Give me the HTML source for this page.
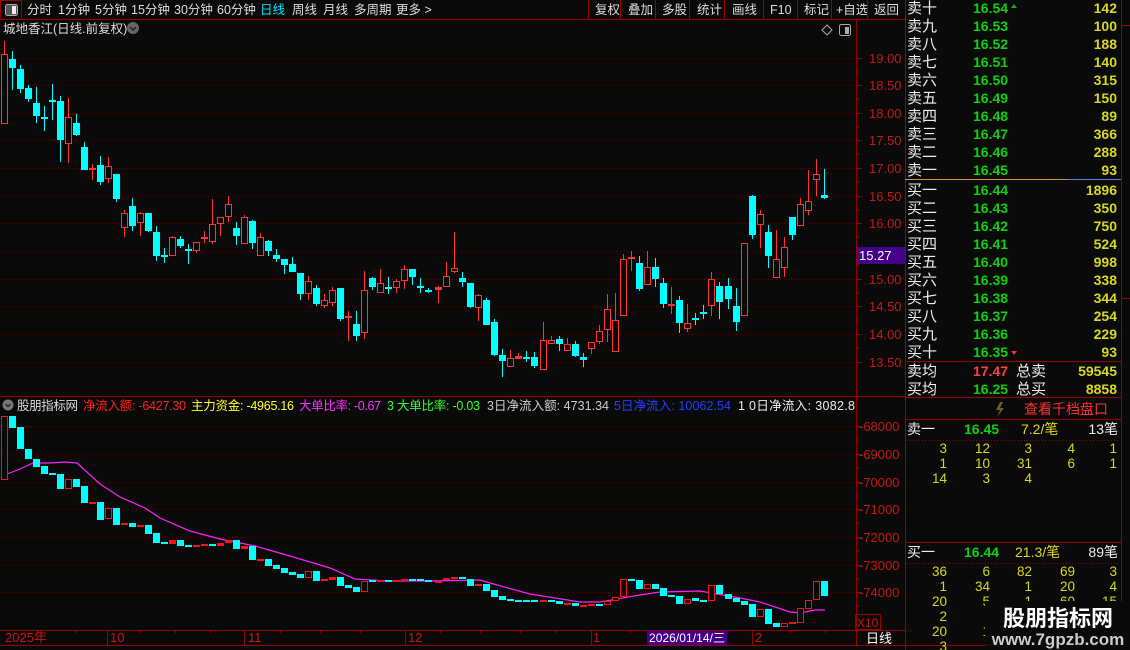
<!DOCTYPE html>
<html><head><meta charset="utf-8"><style>
html,body{margin:0;padding:0;background:#0a0a0a;width:1130px;height:650px;overflow:hidden}
svg{display:block}
text{font-family:"Liberation Sans","Noto Sans CJK SC",sans-serif}
</style></head><body>
<svg width="1130" height="650" viewBox="0 0 1130 650" xmlns="http://www.w3.org/2000/svg">
<rect width="1130" height="650" fill="#0a0a0a"/>
<!-- top bar -->
<rect x="0.5" y="0.5" width="21" height="19" fill="none" stroke="#900"/>
<rect x="5.5" y="4.5" width="12" height="11" rx="2" fill="#555" stroke="#aaa"/>
<rect x="12" y="6" width="4" height="8" fill="#eee"/>
<g font-size="12.5" fill="#ddd">
<text x="27" y="14">分时</text><text x="58" y="14">1分钟</text><text x="95" y="14">5分钟</text><text x="131" y="14">15分钟</text><text x="174" y="14">30分钟</text><text x="217" y="14">60分钟</text><text x="260" y="14" fill="#00e5ff">日线</text><text x="292" y="14">周线</text><text x="323" y="14">月线</text><text x="354" y="14">多周期</text><text x="396" y="14">更多 &gt;</text>
<text x="595" y="14">复权</text><text x="628" y="14">叠加</text><text x="662" y="14">多股</text><text x="697" y="14">统计</text><text x="732" y="14">画线</text><text x="770" y="14">F10</text><text x="804" y="14">标记</text><text x="836" y="14">+自选</text><text x="874" y="14">返回</text>
</g>
<g stroke="#900"><path d="M588.5 0V19M620.5 0V19M655.5 0V19M689.5 0V19M724.5 0V19M763.5 0V19M797.5 0V19M831.5 0V19M867.5 0V19M0 19.5H905"/></g>
<text x="3" y="33" font-size="12.5" fill="#ddd">城地香江(日线.前复权)</text>
<circle cx="133" cy="28" r="6" fill="#666"/><path d="M130 27l3 3 3-3" stroke="#222" stroke-width="1.5" fill="none"/>
<path d="M827 25l5 5-5 5-5-5z" fill="none" stroke="#aaa"/>
<rect x="839.5" y="24.5" width="11" height="11" rx="2" fill="none" stroke="#aaa"/><rect x="845" y="27" width="4" height="7" fill="#aaa"/>
<!-- grid upper -->
<g stroke="#6a0000" stroke-dasharray="1,3">
<path d="M0 58.5H855M0 85.5H855M0 113.5H855M0 140.5H855M0 168.5H855M0 196.5H855M0 223.5H855M0 251.5H855M0 279.5H855M0 306.5H855M0 334.5H855M0 362.5H855"/>
<path d="M0 426.5H855M0 454.5H855M0 482.5H855M0 509.5H855M0 537.5H855M0 565.5H855M0 592.5H855"/>
</g>
<!-- axes lines -->
<g stroke="#900">
<path d="M856.5 20V645M905.5 0V650M1121.5 0V650M0 396.5H905M0 630.5H905M0 645.5H1121"/>
<path d="M856 58.5h6M856 85.5h6M856 113.5h6M856 140.5h6M856 168.5h6M856 196.5h6M856 223.5h6M856 251.5h6M856 279.5h6M856 306.5h6M856 334.5h6M856 362.5h6M856 72h3M856 99h3M856 127h3M856 154h3M856 182h3M856 210h3M856 237h3M856 265h3M856 293h3M856 320h3M856 348h3"/>
<path d="M856 426.5h6M856 454.5h6M856 482.5h6M856 509.5h6M856 537.5h6M856 565.5h6M856 592.5h6M856 440h3M856 468h3M856 496h3M856 523h3M856 551h3M856 579h3M856 606h3"/>
<path d="M107.5 630V645M244.5 630V645M405.5 630V645M591.5 630V645M752.5 630V645M40.5 630v3M75.5 630v3M140.5 630v3M175.5 630v3M210.5 630v3M280.5 630v3M320.5 630v3M360.5 630v3M440.5 630v3M480.5 630v3M520.5 630v3M555.5 630v3M630.5 630v3M690.5 630v3M790.5 630v3M825.5 630v3"/>
</g>
<g font-size="13" fill="#c41818">
<text x="869" y="63">19.00</text><text x="869" y="90">18.50</text><text x="869" y="118">18.00</text><text x="869" y="145">17.50</text><text x="869" y="173">17.00</text><text x="869" y="201">16.50</text><text x="869" y="228">16.00</text><text x="869" y="284">15.00</text><text x="869" y="311">14.50</text><text x="869" y="339">14.00</text><text x="869" y="367">13.50</text>
<text x="859" y="431">-68000</text><text x="859" y="459">-69000</text><text x="859" y="487">-70000</text><text x="859" y="514">-71000</text><text x="859" y="542">-72000</text><text x="859" y="570">-73000</text><text x="859" y="597">-74000</text>
<text x="5" y="642">2025年</text><text x="110" y="642">10</text><text x="248" y="642">11</text><text x="408" y="642">12</text><text x="593" y="642">1</text><text x="755" y="642">2</text>
</g>
<rect x="857" y="247" width="48" height="17" fill="#45008a"/><text x="859" y="260" font-size="13" fill="#fff">15.27</text>
<rect x="647" y="631" width="80" height="14" fill="#45008a"/><text x="649" y="642" font-size="12" fill="#fff" textLength="76">2026/01/14/三</text>
<rect x="855.5" y="614.5" width="25" height="15" fill="none" stroke="#900"/><text x="857" y="627" font-size="12" fill="#c41818">X10</text>
<text x="866" y="643" font-size="13" fill="#fff">日线</text>
<!-- upper candles cyan -->
<g stroke="#00ffff" fill="#00ffff">
<path d="M12.5 51V90M20.5 65V93M28.5 85V102M36.5 87V123M44.5 106V131M52.5 84V120M60.5 96V162M76.5 114V136M84.5 142V170M100.5 156V185M116.5 174V202M132.5 198V231M148.5 213V232M156.5 226V261M164.5 248V263M180.5 236V248M188.5 244V264M236.5 222V245M252.5 220V249M268.5 240V256M276.5 249V262M284.5 259V274M292.5 257V272M300.5 273V300M316.5 285V306M340.5 288V321M356.5 311V341M372.5 277V290M388.5 277V294M412.5 269V285M420.5 278V293M428.5 288V293M462.5 272V287M470.5 283V308M486.5 298V325M494.5 319V356M502.5 349V377M526.5 351V362M534.5 352V368M559.5 336V351M575.5 341V357M583.5 353V367M639.5 256V291M655.5 258V287M663.5 278V308M679.5 296V333M695.5 313V325M703.5 305V319M719.5 282V319M728.5 278V309M736.5 288V331M752.5 195V239M768.5 225V268M792.5 217V240M824.5 169V199"/>
<g stroke="none">
<rect x="9" y="59" width="7" height="9"/><rect x="17" y="69" width="7" height="20"/><rect x="25" y="88" width="7" height="11"/><rect x="33" y="103" width="7" height="13"/><rect x="41" y="117" width="7" height="2"/><rect x="49" y="100" width="7" height="2"/><rect x="57" y="101" width="7" height="39"/><rect x="73" y="123" width="7" height="12"/><rect x="81" y="147" width="7" height="23"/><rect x="97" y="165" width="7" height="17"/><rect x="113" y="174" width="7" height="25"/><rect x="129" y="206" width="7" height="20"/><rect x="145" y="213" width="7" height="18"/><rect x="153" y="232" width="7" height="24"/><rect x="161" y="255" width="7" height="2"/><rect x="177" y="239" width="7" height="7"/><rect x="185" y="249" width="7" height="2"/><rect x="233" y="228" width="7" height="8"/><rect x="249" y="221" width="7" height="22"/><rect x="265" y="241" width="7" height="10"/><rect x="273" y="255" width="7" height="4"/><rect x="281" y="259" width="7" height="6"/><rect x="289" y="264" width="7" height="8"/><rect x="297" y="273" width="7" height="21"/><rect x="313" y="288" width="7" height="16"/><rect x="337" y="288" width="7" height="31"/><rect x="353" y="324" width="7" height="12"/><rect x="369" y="278" width="7" height="9"/><rect x="385" y="287" width="7" height="2"/><rect x="409" y="269" width="7" height="8"/><rect x="417" y="286" width="7" height="2"/><rect x="425" y="290" width="7" height="2"/><rect x="459" y="278" width="7" height="4"/><rect x="467" y="283" width="7" height="24"/><rect x="483" y="300" width="7" height="25"/><rect x="491" y="322" width="7" height="33"/><rect x="499" y="355" width="7" height="6"/><rect x="523" y="357" width="7" height="2"/><rect x="531" y="357" width="7" height="9"/><rect x="556" y="339" width="7" height="5"/><rect x="572" y="344" width="7" height="12"/><rect x="580" y="357" width="7" height="3"/><rect x="636" y="263" width="7" height="26"/><rect x="652" y="267" width="7" height="12"/><rect x="660" y="283" width="7" height="21"/><rect x="676" y="300" width="7" height="23"/><rect x="692" y="318" width="7" height="2"/><rect x="700" y="312" width="7" height="2"/><rect x="716" y="286" width="7" height="16"/><rect x="725" y="286" width="7" height="13"/><rect x="733" y="306" width="7" height="16"/><rect x="749" y="196" width="7" height="39"/><rect x="765" y="232" width="7" height="24"/><rect x="789" y="217" width="7" height="18"/><rect x="821" y="195" width="7" height="3"/>
</g></g>
<!-- upper candles red -->
<g stroke="#ff3535" fill="#0a0a0a">
<path d="M4.5 41V124M68.5 98V163M92.5 164V180M108.5 157V183M124.5 210V237M140.5 212V236M172.5 236V256M196.5 242V253M204.5 231V243M212.5 199V244M220.5 217V236M228.5 196V222M244.5 215V244M260.5 233V256M308.5 276V300M324.5 294V308M332.5 287V306M348.5 311V341M364.5 271V339M380.5 269V293M396.5 279V293M404.5 265V289M438.5 286V303M446.5 262V287M454.5 232V273M478.5 294V321M510.5 350V367M518.5 353V359M543.5 322V370M551.5 336V344M567.5 338V351M591.5 342V354M599.5 325V344M607.5 294V342M615.5 293V352M623.5 254V316M631.5 251V271M647.5 251V285M671.5 287V314M687.5 304V332M711.5 272V316M744.5 243V316M760.5 210V248M776.5 230V278M784.5 237V277M800.5 198V226M808.5 170V215M816.5 159V196"/>
<rect x="1.5" y="54.5" width="6" height="69"/><rect x="65.5" y="117.5" width="6" height="26"/><rect x="105.5" y="166.5" width="6" height="12"/><rect x="121.5" y="213.5" width="6" height="14"/><rect x="137.5" y="213.5" width="6" height="9"/><rect x="169.5" y="237.5" width="6" height="18"/><rect x="193.5" y="242.5" width="6" height="8"/><rect x="209.5" y="224.5" width="6" height="17"/><rect x="217.5" y="217.5" width="6" height="6"/><rect x="225.5" y="204.5" width="6" height="12"/><rect x="241.5" y="217.5" width="6" height="26"/><rect x="257.5" y="237.5" width="6" height="18"/><rect x="305.5" y="281.5" width="6" height="12"/><rect x="321.5" y="300.5" width="6" height="5"/><rect x="329.5" y="290.5" width="6" height="12"/><rect x="361.5" y="290.5" width="6" height="42"/><rect x="377.5" y="283.5" width="6" height="9"/><rect x="393.5" y="281.5" width="6" height="6"/><rect x="401.5" y="269.5" width="6" height="11"/><rect x="443.5" y="276.5" width="6" height="10"/><rect x="451.5" y="268.5" width="6" height="3"/><rect x="475.5" y="295.5" width="6" height="12"/><rect x="507.5" y="358.5" width="6" height="8"/><rect x="540.5" y="340.5" width="6" height="29"/><rect x="548.5" y="340.5" width="6" height="3"/><rect x="564.5" y="344.5" width="6" height="6"/><rect x="588.5" y="342.5" width="6" height="6"/><rect x="596.5" y="331.5" width="6" height="10"/><rect x="604.5" y="309.5" width="6" height="20"/><rect x="612.5" y="320.5" width="6" height="31"/><rect x="620.5" y="259.5" width="6" height="56"/><rect x="644.5" y="267.5" width="6" height="17"/><rect x="684.5" y="323.5" width="6" height="5"/><rect x="708.5" y="279.5" width="6" height="26"/><rect x="741.5" y="243.5" width="6" height="72"/><rect x="757.5" y="214.5" width="6" height="10"/><rect x="773.5" y="259.5" width="6" height="18"/><rect x="781.5" y="247.5" width="6" height="20"/><rect x="797.5" y="204.5" width="6" height="21"/><rect x="805.5" y="201.5" width="6" height="9"/><rect x="813.5" y="174.5" width="6" height="5"/>
<g fill="#ff3535" stroke="none"><rect x="89" y="168" width="7" height="2"/><rect x="201" y="237" width="7" height="2"/><rect x="345" y="316" width="7" height="2"/><rect x="435" y="287" width="7" height="3"/><rect x="515" y="356" width="7" height="3"/><rect x="628" y="257" width="7" height="2"/><rect x="668" y="304" width="7" height="2"/></g>
</g>
<!-- indicator header -->
<circle cx="8" cy="405" r="5.5" fill="#777"/><path d="M5.5 404l2.5 2.5 2.5-2.5" stroke="#222" fill="none" stroke-width="1.3"/>
<g font-size="12.5">
<text x="17" y="410" fill="#ddd" textLength="61">股朋指标网</text>
<text x="83" y="410" fill="#ff2020" textLength="103">净流入额: -6427.30</text>
<text x="191" y="410" fill="#ffff30" textLength="103">主力资金: -4965.16</text>
<text x="299" y="410" fill="#ff30ff" textLength="82">大单比率: -0.67</text>
<text x="387" y="410" fill="#30ff30" textLength="93">3 大单比率: -0.03</text>
<text x="487" y="410" fill="#ccc" textLength="122">3日净流入额: 4731.34</text>
<text x="614" y="410" fill="#2040ff" textLength="117">5日净流入: 10062.54</text>
<text x="738" y="410" fill="#eee" textLength="117">1 0日净流入: 3082.8</text>
</g>
<!-- magenta line -->
<polyline fill="none" stroke="#ff20ff" stroke-width="1.2" points="2,476 20,469 33,463 50,463 65,462 77,463 100,484 120,497 145,508 160,518 190,531 220,539 240,543 255,546 290,556 330,568 355,579 390,581 430,581 480,580 490,583 530,594 580,602 600,602 640,595 660,592 700,591 740,598 760,602 790,612 800,613 815,610 825,610"/>
<!-- lower bars cyan -->
<g fill="#00ffff">
<rect x="9" y="416" width="7" height="12"/><rect x="17" y="427" width="7" height="22"/><rect x="25" y="449" width="7" height="10"/><rect x="33" y="459" width="7" height="8"/><rect x="41" y="466" width="7" height="8"/><rect x="49" y="473" width="7" height="2"/><rect x="57" y="474" width="7" height="15"/><rect x="73" y="479" width="7" height="8"/><rect x="81" y="486" width="7" height="17"/><rect x="97" y="502" width="7" height="18"/><rect x="113" y="508" width="7" height="17"/><rect x="129" y="523" width="7" height="4"/><rect x="145" y="525" width="7" height="9"/><rect x="153" y="533" width="7" height="10"/><rect x="161" y="542" width="7" height="2"/><rect x="177" y="540" width="7" height="6"/><rect x="185" y="545" width="7" height="2"/><rect x="209" y="544" width="7" height="2"/><rect x="233" y="540" width="7" height="9"/><rect x="249" y="546" width="7" height="14"/><rect x="265" y="559" width="7" height="7"/><rect x="273" y="565" width="7" height="4"/><rect x="281" y="568" width="7" height="5"/><rect x="289" y="572" width="7" height="3"/><rect x="297" y="574" width="7" height="4"/><rect x="313" y="571" width="7" height="10"/><rect x="337" y="577" width="7" height="9"/><rect x="345" y="585" width="7" height="3"/><rect x="353" y="587" width="7" height="5"/><rect x="369" y="580" width="7" height="2"/><rect x="385" y="580" width="7" height="2"/><rect x="409" y="579" width="7" height="2"/><rect x="417" y="579" width="7" height="2"/><rect x="425" y="580" width="7" height="2"/><rect x="459" y="577" width="7" height="2"/><rect x="467" y="579" width="7" height="7"/><rect x="483" y="584" width="7" height="7"/><rect x="491" y="590" width="7" height="7"/><rect x="499" y="596" width="7" height="4"/><rect x="507" y="599" width="7" height="2"/><rect x="515" y="600" width="7" height="2"/><rect x="523" y="600" width="7" height="2"/><rect x="531" y="600" width="7" height="2"/><rect x="548" y="600" width="7" height="2"/><rect x="556" y="601" width="7" height="3"/><rect x="572" y="603" width="7" height="3"/><rect x="596" y="604" width="7" height="2"/><rect x="628" y="579" width="7" height="2"/><rect x="636" y="580" width="7" height="9"/><rect x="652" y="584" width="7" height="5"/><rect x="660" y="588" width="7" height="8"/><rect x="668" y="595" width="7" height="2"/><rect x="676" y="596" width="7" height="8"/><rect x="692" y="598" width="7" height="3"/><rect x="700" y="600" width="7" height="2"/><rect x="716" y="585" width="7" height="9"/><rect x="725" y="594" width="7" height="5"/><rect x="733" y="598" width="7" height="4"/><rect x="741" y="601" width="7" height="4"/><rect x="749" y="604" width="7" height="13"/><rect x="765" y="609" width="7" height="15"/><rect x="773" y="623" width="7" height="4"/><rect x="821" y="581" width="7" height="15"/>
</g>
<g stroke="#ff1010" fill="#0a0a0a">
<rect x="1.5" y="416.5" width="6" height="63"/><rect x="105.5" y="508.5" width="6" height="10"/><rect x="305.5" y="571.5" width="6" height="6"/><rect x="361.5" y="581.5" width="6" height="10"/><rect x="612.5" y="597.5" width="6" height="3"/><rect x="620.5" y="579.5" width="6" height="17"/><rect x="644.5" y="584.5" width="6" height="4"/><rect x="684.5" y="599.5" width="6" height="4"/><rect x="708.5" y="585.5" width="6" height="15"/><rect x="757.5" y="609.5" width="6" height="7"/><rect x="781.5" y="623.5" width="6" height="3"/><rect x="797.5" y="608.5" width="6" height="14"/><rect x="805.5" y="600.5" width="6" height="8"/><rect x="813.5" y="581.5" width="6" height="18"/><rect x="65.5" y="479.5" width="6" height="9"/><rect x="604.5" y="601.5" width="6" height="3"/>
</g>
<g fill="#ff1010">
<rect x="89" y="502" width="7" height="2"/><rect x="121" y="523" width="7" height="2"/><rect x="137" y="525" width="7" height="2"/><rect x="169" y="540" width="7" height="4"/><rect x="193" y="545" width="7" height="2"/><rect x="201" y="544" width="7" height="2"/><rect x="217" y="543" width="7" height="3"/><rect x="225" y="540" width="7" height="3"/><rect x="241" y="546" width="7" height="3"/><rect x="257" y="559" width="7" height="2"/><rect x="321" y="579" width="7" height="2"/><rect x="329" y="577" width="7" height="3"/><rect x="377" y="580" width="7" height="2"/><rect x="393" y="580" width="7" height="2"/><rect x="401" y="579" width="7" height="2"/><rect x="435" y="581" width="7" height="2"/><rect x="443" y="578" width="7" height="2"/><rect x="451" y="577" width="7" height="2"/><rect x="475" y="584" width="7" height="2"/><rect x="540" y="600" width="7" height="2"/><rect x="564" y="603" width="7" height="2"/><rect x="580" y="605" width="7" height="2"/><rect x="588" y="604" width="7" height="2"/><rect x="789" y="622" width="7" height="2"/>
</g>
<!-- order book -->
<g font-size="15" fill="#eee">
<text x="907" y="13">卖十</text><text x="907" y="31">卖九</text><text x="907" y="49">卖八</text><text x="907" y="67">卖七</text><text x="907" y="85">卖六</text><text x="907" y="103">卖五</text><text x="907" y="121">卖四</text><text x="907" y="139">卖三</text><text x="907" y="157">卖二</text><text x="907" y="175">卖一</text>
<text x="907" y="195">买一</text><text x="907" y="213">买二</text><text x="907" y="231">买三</text><text x="907" y="249">买四</text><text x="907" y="267">买五</text><text x="907" y="285">买六</text><text x="907" y="303">买七</text><text x="907" y="321">买八</text><text x="907" y="339">买九</text><text x="907" y="357">买十</text>
<text x="907" y="376">卖均</text><text x="907" y="394">买均</text><text x="1016" y="376">总卖</text><text x="1016" y="394">总买</text>
</g>
<g font-size="14" fill="#10d010" font-weight="bold">
<text x="973" y="13">16.54</text><text x="973" y="31">16.53</text><text x="973" y="49">16.52</text><text x="973" y="67">16.51</text><text x="973" y="85">16.50</text><text x="973" y="103">16.49</text><text x="973" y="121">16.48</text><text x="973" y="139">16.47</text><text x="973" y="157">16.46</text><text x="973" y="175">16.45</text>
<text x="973" y="195">16.44</text><text x="973" y="213">16.43</text><text x="973" y="231">16.42</text><text x="973" y="249">16.41</text><text x="973" y="267">16.40</text><text x="973" y="285">16.39</text><text x="973" y="303">16.38</text><text x="973" y="321">16.37</text><text x="973" y="339">16.36</text><text x="973" y="357">16.35</text>
<text x="973" y="376" fill="#ff4040">17.47</text><text x="973" y="394">16.25</text>
</g>
<path d="M1014 4l3 4h-6z" fill="#10b010"/><path d="M1014 355l3-4h-6z" fill="#ff3030"/>
<g font-size="14" fill="#d8d820" font-weight="bold" text-anchor="end">
<text x="1117" y="13">142</text><text x="1117" y="31">100</text><text x="1117" y="49">188</text><text x="1117" y="67">140</text><text x="1117" y="85">315</text><text x="1117" y="103">150</text><text x="1117" y="121">89</text><text x="1117" y="139">366</text><text x="1117" y="157">288</text><text x="1117" y="175">93</text>
<text x="1117" y="195">1896</text><text x="1117" y="213">350</text><text x="1117" y="231">750</text><text x="1117" y="249">524</text><text x="1117" y="267">998</text><text x="1117" y="285">338</text><text x="1117" y="303">344</text><text x="1117" y="321">254</text><text x="1117" y="339">229</text><text x="1117" y="357">93</text>
<text x="1117" y="376">59545</text><text x="1117" y="394">8858</text>
</g>
<path d="M905 179.5H1068" stroke="#d09038"/><path d="M1068 179.5H1121" stroke="#4a88c8"/>
<g stroke="#900"><path d="M905 361.5H1121M905 397.5H1121M905 419.5H1121M905 542.5H1121M1121 25.5H1130M1121 298.5H1130"/></g>
<path d="M1000 402l-4 8h4l-3 7 7-9h-4l3-6z" fill="#6a6020"/>
<text x="1024" y="414" font-size="14" fill="#ff3030">查看千档盘口</text>
<g font-size="14">
<text x="907" y="434" fill="#eee">卖一</text><text x="964" y="434" fill="#10d010" font-weight="bold">16.45</text><text x="1021" y="434" fill="#d8d820">7.2/笔</text><text x="1118" y="434" fill="#eee" text-anchor="end">13笔</text>
<text x="907" y="557" fill="#eee">买一</text><text x="964" y="557" fill="#10d010" font-weight="bold">16.44</text><text x="1015" y="557" fill="#d8d820">21.3/笔</text><text x="1118" y="557" fill="#eee" text-anchor="end">89笔</text>
</g>
<path d="M907 440.5H1120M907 563.5H1120" stroke="#900" stroke-dasharray="1,2"/>
<g font-size="13.5" fill="#d8d820" text-anchor="end">
<text x="947" y="453">3</text><text x="990" y="453">12</text><text x="1032" y="453">3</text><text x="1075" y="453">4</text><text x="1117" y="453">1</text>
<text x="947" y="468">1</text><text x="990" y="468">10</text><text x="1032" y="468">31</text><text x="1075" y="468">6</text><text x="1117" y="468">1</text>
<text x="947" y="483">14</text><text x="990" y="483">3</text><text x="1032" y="483">4</text>
<text x="947" y="576">36</text><text x="990" y="576">6</text><text x="1032" y="576">82</text><text x="1075" y="576">69</text><text x="1117" y="576">3</text>
<text x="947" y="591">1</text><text x="990" y="591">34</text><text x="1032" y="591">1</text><text x="1075" y="591">20</text><text x="1117" y="591">4</text>
<text x="947" y="606">20</text><text x="990" y="606">5</text><text x="1032" y="606">1</text><text x="1075" y="606">60</text><text x="1117" y="606">15</text>
<text x="947" y="621">2</text><text x="947" y="636">20</text><text x="990" y="636">1</text><text x="947" y="651">3</text>
</g>
<rect x="985" y="601" width="145" height="49" fill="#0a0a0a"/>
<text x="1058" y="626" font-size="22" font-weight="bold" fill="#fff" text-anchor="middle">股朋指标网</text>
<text x="1058" y="645" font-size="17" font-weight="bold" fill="#ccc" text-anchor="middle">www.7gpzb.com</text>
</svg>
</body></html>
